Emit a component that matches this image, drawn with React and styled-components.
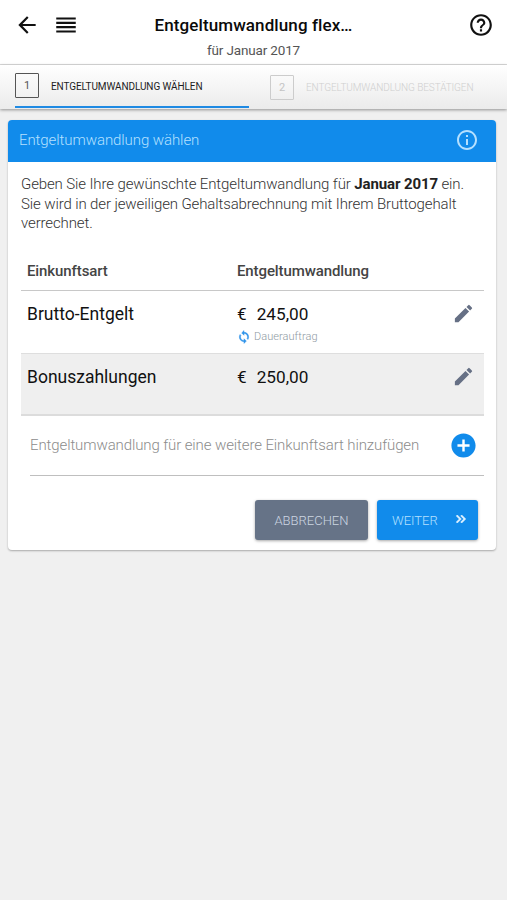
import React from 'react';
import styled, { createGlobalStyle } from 'styled-components';
import {
  MdAddCircle,
  MdArrowBack,
  MdEdit,
  MdHelpOutline,
  MdInfoOutline,
  MdKeyboardDoubleArrowRight,
  MdReorder,
  MdSync,
} from 'react-icons/md';

const GlobalStyle = createGlobalStyle`
  * {
    box-sizing: border-box;
  }

  body {
    margin: 0;
    background: #f0f0f0;
    color: #1e1e1e;
    font-family: Roboto, "Liberation Sans", sans-serif;
  }

  svg {
    display: block;
    flex: none;
  }
`;

const Page = styled.div`
  width: 100%;
  min-height: 100vh;
`;

const TopBar = styled.header`
  display: grid;
  grid-template-columns: 92px 1fr 92px;
  height: 65px;
  padding-top: 12px;
  background: #fff;
  border-bottom: 1px solid #dcdcdc;
`;

const BarIcons = styled.div`
  display: flex;
  align-items: flex-start;
  justify-content: ${props => (props.$end ? 'flex-end' : 'flex-start')};
  gap: 13px;
  padding: 0 13px 0 14px;
  color: #111;
`;

const Titles = styled.div`
  text-align: center;
  white-space: nowrap;
`;

const Title = styled.h1`
  margin: 0;
  font-size: 17px;
  line-height: 26px;
  font-weight: 500;
  letter-spacing: 0.1px;
  color: #0a0a0a;
`;

const Subtitle = styled.div`
  font-size: 13.5px;
  line-height: 24px;
  letter-spacing: -0.15px;
  color: #555;
`;

const Steps = styled.nav`
  display: grid;
  grid-template-columns: 234px 1fr;
  column-gap: 21px;
  height: 44px;
  padding: 0 15px;
  background: linear-gradient(#fff, #ebebeb);
  box-shadow: 0 1px 3px rgba(0, 0, 0, 0.4);
`;

const Step = styled.div`
  display: flex;
  align-items: center;
  gap: 12px;
  height: 43px;
  padding-top: ${props => (props.$active ? '1px' : '2px')};
  border-bottom: ${props => (props.$active ? '2px solid #1f8ae3' : 'none')};
  color: ${props => (props.$active ? '#1e1e1e' : '#cfcfcf')};
  font-size: 10px;
  font-weight: ${props => (props.$active ? 400 : 300)};
  letter-spacing: -0.09px;
  white-space: nowrap;
`;

const StepNumber = styled.span`
  display: flex;
  align-items: center;
  justify-content: center;
  width: 24px;
  height: 25px;
  margin-bottom: ${props => (props.$active ? '2px' : '0')};
  border: 1.5px solid ${props => (props.$active ? '#555' : '#ccc')};
  border-radius: 1px;
  color: ${props => (props.$active ? '#555' : '#c4c4c4')};
  font-size: 11px;
  font-weight: 400;
`;

const Card = styled.section`
  margin: 11px 11px 0 8px;
  height: 430px;
  background: #fff;
  border-radius: 4px;
  box-shadow: 0 1px 2px rgba(0, 0, 0, 0.3);
`;

const CardHeader = styled.div`
  display: flex;
  align-items: center;
  justify-content: space-between;
  height: 42px;
  padding: 0 17px 2px 11px;
  border-radius: 4px 4px 0 0;
  background: #118beb;
  color: #b5e0ff;
  font-size: 15px;
  font-weight: 300;
  letter-spacing: -0.08px;
`;

const CardBody = styled.div`
  padding: 13px 12px 0 13px;
`;

const Intro = styled.p`
  margin: 0;
  font-size: 15px;
  line-height: 19.5px;
  font-weight: 300;
  letter-spacing: -0.12px;
  color: #333;
  white-space: nowrap;

  b {
    font-weight: 700;
    color: #222;
  }
`;

const TableHead = styled.div`
  display: grid;
  grid-template-columns: 210px 1fr;
  align-items: center;
  height: 38px;
  margin-top: 19px;
  padding: 0 6px;
  border-bottom: 1px solid #c8c8c8;
  font-size: 15px;
  font-weight: 500;
  letter-spacing: -0.1px;
  color: #444;
`;

const Row = styled.div`
  display: grid;
  grid-template-columns: 210px 1fr 24px;
  height: ${props => (props.$shaded ? '62px' : '63px')};
  padding: 11px 8px 0 6px;
  background: ${props => (props.$shaded ? '#efefef' : '#fff')};
  border-bottom: ${props => (props.$shaded ? '2px solid #dcdcdc' : '1px solid #dedede')};
  font-size: 17.5px;
  line-height: 24px;
  color: #111;
`;

const Amount = styled.div`
  display: flex;
  gap: 10px;
  font-size: 17.2px;
`;

const Recurring = styled.div`
  display: flex;
  align-items: center;
  gap: 3px;
  height: 22px;
  color: #8f9aa3;
  font-size: 11px;
  font-weight: 300;
  letter-spacing: 0.05px;
`;

const EditButton = styled.button`
  height: 23px;
  padding: 0;
  border: 0;
  background: none;
  color: #667085;
`;

const AddRow = styled.div`
  display: flex;
  align-items: center;
  justify-content: space-between;
  height: 60px;
  margin-left: 9px;
  padding-right: 6px;
  border-bottom: 1px solid #bfbfbf;
  color: #8c8c8c;
  font-size: 15px;
  font-weight: 300;
  letter-spacing: -0.11px;
  white-space: nowrap;
`;

const Actions = styled.div`
  display: flex;
  justify-content: flex-end;
  gap: 9px;
  padding: 24px 6px 0 0;
`;

const Button = styled.button`
  display: flex;
  align-items: center;
  justify-content: ${props => (props.$primary ? 'space-between' : 'center')};
  width: ${props => (props.$primary ? '101px' : '113px')};
  height: 40px;
  padding: ${props => (props.$primary ? '2px 9px 0 15px' : '2px 0 0')};
  border: 0;
  border-radius: 3px;
  background: ${props => (props.$primary ? '#118beb' : '#667387')};
  box-shadow: 0 1px 3px rgba(0, 0, 0, 0.35);
  color: ${props => (props.$primary ? '#b5e0ff' : '#ccd6e2')};
  font-family: inherit;
  font-size: 13px;
  font-weight: 300;
`;

const NextIcon = styled(MdKeyboardDoubleArrowRight)`
  margin-top: -4px;
  color: #e4f3ff;

  path:not([fill='none']) {
    stroke: currentColor;
    stroke-width: 1;
  }
`;

const RepeatIcon = styled(MdSync)`
  color: #2f94ea;

  path:not([fill='none']) {
    stroke: currentColor;
    stroke-width: 0.8;
  }
`;

const incomes = [
  { name: 'Brutto-Entgelt', amount: '245,00', recurring: true },
  { name: 'Bonuszahlungen', amount: '250,00', recurring: false },
];

function IncomeRow({ income, shaded }) {
  return (
    <Row $shaded={shaded}>
      <div>{income.name}</div>
      <div>
        <Amount>
          <span>€</span>
          <span>{income.amount}</span>
        </Amount>
        {income.recurring && (
          <Recurring>
            <RepeatIcon size={14} />
            Dauerauftrag
          </Recurring>
        )}
      </div>
      <EditButton aria-label="Bearbeiten">
        <MdEdit size={23} />
      </EditButton>
    </Row>
  );
}

function App() {
  return (
    <Page>
      <GlobalStyle />
      <TopBar>
        <BarIcons>
          <MdArrowBack size={26} />
          <MdReorder size={26} />
        </BarIcons>
        <Titles>
          <Title>Entgeltumwandlung flex…</Title>
          <Subtitle>für Januar 2017</Subtitle>
        </Titles>
        <BarIcons $end>
          <MdHelpOutline size={26} />
        </BarIcons>
      </TopBar>
      <Steps>
        <Step $active>
          <StepNumber $active>1</StepNumber>
          ENTGELTUMWANDLUNG WÄHLEN
        </Step>
        <Step>
          <StepNumber>2</StepNumber>
          ENTGELTUMWANDLUNG BESTÄTIGEN
        </Step>
      </Steps>
      <Card>
        <CardHeader>
          Entgeltumwandlung wählen
          <MdInfoOutline size={24} />
        </CardHeader>
        <CardBody>
          <Intro>
            Geben Sie Ihre gewünschte Entgeltumwandlung für <b>Januar 2017</b> ein.
            <br />
            Sie wird in der jeweiligen Gehaltsabrechnung mit Ihrem Bruttogehalt
            <br />
            verrechnet.
          </Intro>
          <TableHead>
            <span>Einkunftsart</span>
            <span>Entgeltumwandlung</span>
          </TableHead>
          {incomes.map((income, i) => (
            <IncomeRow key={income.name} income={income} shaded={i % 2 === 1} />
          ))}
          <AddRow>
            Entgeltumwandlung für eine weitere Einkunftsart hinzufügen
            <MdAddCircle size={29} color="#118beb" />
          </AddRow>
          <Actions>
            <Button>ABBRECHEN</Button>
            <Button $primary>
              WEITER
              <NextIcon size={16} />
            </Button>
          </Actions>
        </CardBody>
      </Card>
    </Page>
  );
}

export default App;
